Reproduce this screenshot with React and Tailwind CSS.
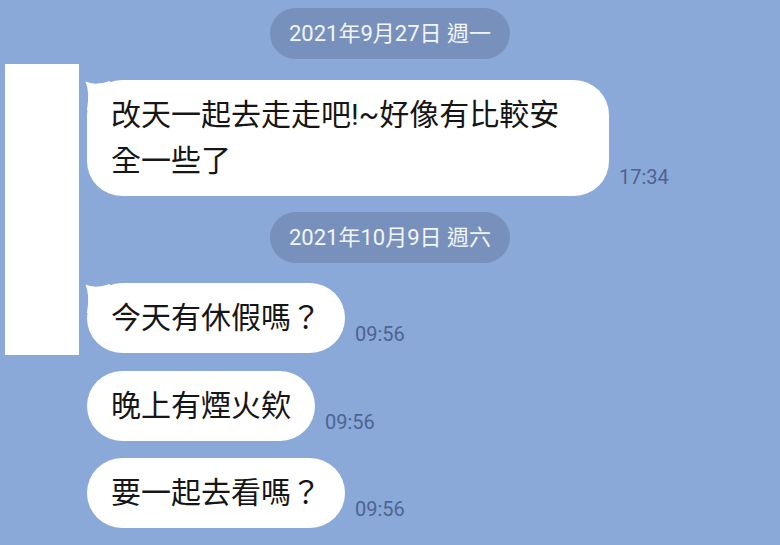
const font = { fontFamily: 'Roboto, "Noto Sans CJK TC", "Noto Sans CJK SC", sans-serif' };

function DatePill({ children, className = "" }) {
  return (
    <div className={`flex justify-center ${className}`}>
      <div className="w-[240px] h-[51px] rounded-full bg-[#7891bc] flex items-center justify-center text-[22px] text-[#f2f5fa] leading-none">
        {children}
      </div>
    </div>
  );
}

// little hook on the top-left corner of the first bubble in a group
function Tail() {
  return (
    <svg
      className="absolute left-[-2px] top-0"
      width="30"
      height="30"
      viewBox="0 0 30 30"
    >
      <path d="M0.5 1.5 Q10 6 25 1 L30 30 L2 30 Q5 12 0.5 1.5 Z" fill="#ffffff" />
    </svg>
  );
}

function Message({ text, time, tail = false, width, className = "" }) {
  return (
    <div className={`flex items-end pl-[87px] ${className}`}>
      <div
        className={`relative bg-white rounded-[35px] px-[24px] py-[12px] text-[30px] leading-[46px] text-[#161616] ${width || ""}`}
      >
        {tail && <Tail />}
        <span className="relative">{text}</span>
      </div>
      <div className="ml-[10px] mb-[9px] text-[20px] leading-none text-[#4d6491]">
        {time}
      </div>
    </div>
  );
}

export default function App() {
  return (
    <div
      className="relative w-[780px] h-[545px] overflow-hidden bg-[#8aa8d8] pt-[8px] flex flex-col"
      style={font}
    >
      <DatePill>2021年9月27日 週一</DatePill>

      <Message
        className="mt-[21px]"
        tail
        width="w-[522px] rounded-[32px]"
        time="17:34"
        text={
          <>
            改天一起去走走吧!~好像有比較安
            <br />
            全一些了
          </>
        }
      />

      <DatePill className="mt-[16px]">2021年10月9日 週六</DatePill>

      <Message className="mt-[20px]" tail text="今天有休假嗎？" time="09:56" />
      <Message className="mt-[18px]" text="晚上有煙火欸" time="09:56" />
      <Message className="mt-[17px]" text="要一起去看嗎？" time="09:56" />

      {/* white cover over the avatar column */}
      <div className="absolute left-[5px] top-[64px] w-[74px] h-[291px] bg-white" />
    </div>
  );
}
